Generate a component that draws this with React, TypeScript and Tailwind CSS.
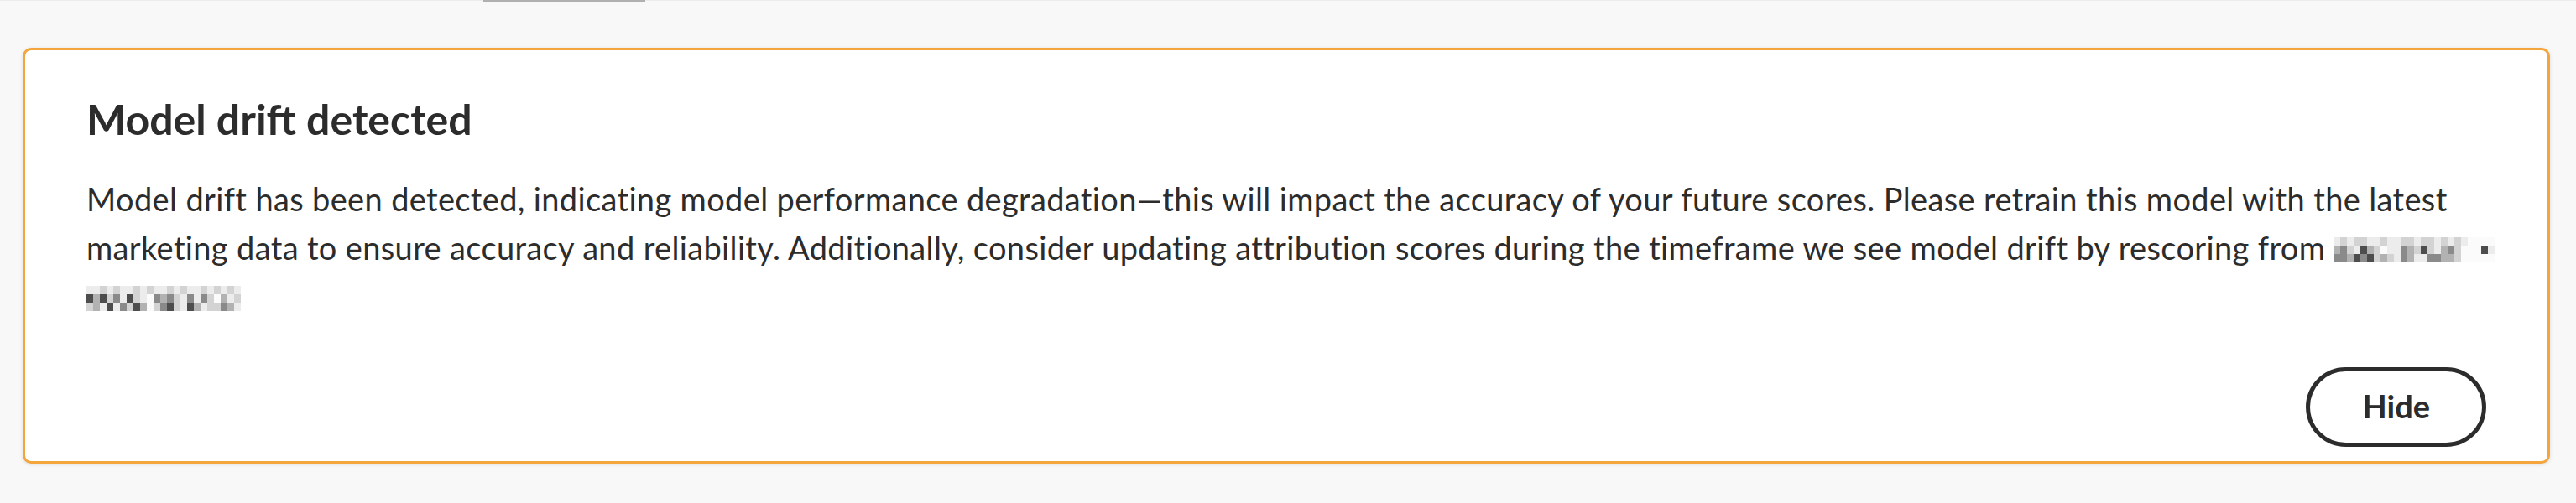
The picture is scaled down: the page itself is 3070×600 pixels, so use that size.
import React from "react";

// grey shades used by the redacted (pixelated) dates
const shades = [
  "bg-[#fbfbfb]",
  "bg-[#ececec]",
  "bg-[#d3d3d3]",
  "bg-[#b2b2b2]",
  "bg-[#8a8a8a]",
  "bg-[#4d4d4d]",
];

const Mosaic = ({ rows }: { rows: string[] }) => (
  <span className="inline-flex flex-col align-top mt-[17px]">
    {rows.map((row, r) => (
      <span key={r} className="flex">
        {row.split("").map((c, i) => (
          <span key={i} className={`block w-[8px] h-[10px] ${shades[Number(c)]}`} />
        ))}
      </span>
    ))}
  </span>
);

const dateA = [
  "121221121122122121210000",
  "342153201143252134200051",
  "443545232143114433200000",
];

const dateB = [
  "11212112121121211212121",
  "53524152104342141420312",
  "23151425302452153122431",
];

export default function App() {
  return (
    <div className="w-full h-[600px] bg-[#f8f8f8] font-['Lato','Liberation_Sans',sans-serif] overflow-hidden">
      <div className="h-[2px] border-t border-[#ececec] flex">
        <div className="ml-[576px] w-[193px] h-[2px] -mt-px bg-[#b0b0b0]" />
      </div>

      <div className="mt-[55px] ml-[27px] mr-[31px] bg-white border-[3px] border-[#f4a53c] rounded-[10px] shadow-[0_1px_4px_rgba(0,0,0,0.12)] pt-[49px] px-[73px] pb-[17px]">
        <h2 className="text-[50px] leading-[66px] font-bold text-[#2c2c2c]">
          Model drift detected
        </h2>

        <p className="mt-[33px] text-[38px] leading-[58px] tracking-[0.35px] text-[#2c2c2c] whitespace-nowrap">
          Model drift has been detected, indicating model performance degradation—this will impact the accuracy of your
          future scores. Please retrain this model with the latest
          <br />
          marketing data to ensure accuracy and reliability. Additionally, consider updating attribution scores during
          the timeframe we see model drift by rescoring from <Mosaic rows={dateA} />
          <br />
          <Mosaic rows={dateB} />
        </p>

        <div className="mt-[56px] flex justify-end">
          <button className="h-[95px] px-[62px] pb-[4px] rounded-full border-[5px] border-[#2c2c2c] bg-white text-[38px] font-bold text-[#2c2c2c] leading-none">
            Hide
          </button>
        </div>
      </div>
    </div>
  );
}
